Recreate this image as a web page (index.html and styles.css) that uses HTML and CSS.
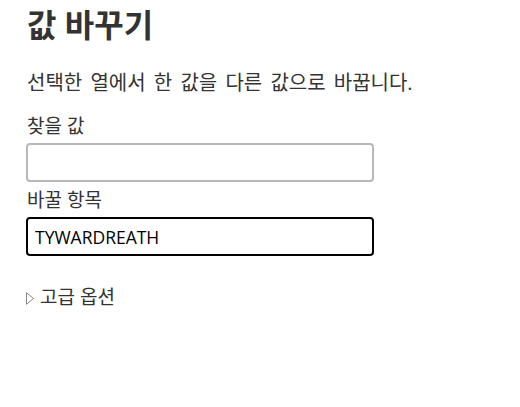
FILE: index.html
```html
<!DOCTYPE html>
<html lang="ko">
<head>
<meta charset="utf-8">
<link rel="stylesheet" href="styles.css">
</head>
<body>
<main class="panel">
  <h1 class="title">값 바꾸기</h1>
  <p class="desc">선택한 열에서 한 값을 다른 값으로 바꿉니다.</p>
  <label class="field">
    <span class="label">찾을 값</span>
    <input class="input" type="text" value="">
  </label>
  <label class="field field-second">
    <span class="label">바꿀 항목</span>
    <input class="input input-active" type="text" value="TYWARDREATH">
  </label>
  <details class="advanced">
    <summary class="summary"><svg class="tri" width="9" height="13" viewBox="0 0 9 13"><path d="M0.5 0.7 L7.5 6.5 L0.5 12.3 Z" fill="#fff" stroke="#888" stroke-width="1"/></svg>고급 옵션</summary>
  </details>
</main>
</body>
</html>
```
FILE: styles.css
```css
html, body {
  margin: 0;
  background: #fff;
}
body {
  font-family: "Open Sans", "Noto Sans CJK KR", sans-serif;
  color: #333;
}
.panel {
  padding: 5px 26px 0 26px;
  display: flex;
  flex-direction: column;
  align-items: flex-start;
}
.title {
  margin: 0;
  font-size: 32px;
  font-weight: 700;
  line-height: 40px;
  padding-left: 1px;
}
.desc {
  margin: 24px 0 0 0;
  font-size: 20px;
  line-height: 28px;
  padding-left: 1px;
  word-spacing: 3px;
}
.field {
  display: flex;
  flex-direction: column;
  margin-top: 16px;
}
.field-second {
  margin-top: 5px;
}
.label {
  font-size: 19px;
  line-height: 26px;
  padding-left: 1px;
}
.input {
  box-sizing: border-box;
  width: 348px;
  height: 39px;
  margin: 4px 0 0 0;
  border: 2px solid #b8b8b8;
  border-radius: 4px;
  padding: 0 7px;
  font-family: "Open Sans", "Noto Sans CJK KR", sans-serif;
  font-size: 17.5px;
  color: #000;
  outline: none;
}
.input-active {
  border-color: #000;
}
.advanced {
  margin-top: 28px;
}
.summary {
  list-style: none;
  display: flex;
  align-items: center;
  gap: 5px;
  font-size: 19px;
  line-height: 26px;
  cursor: pointer;
}
.summary::-webkit-details-marker {
  display: none;
}
.tri {
  display: block;
  flex: none;
  margin-top: 3px;
}
```
